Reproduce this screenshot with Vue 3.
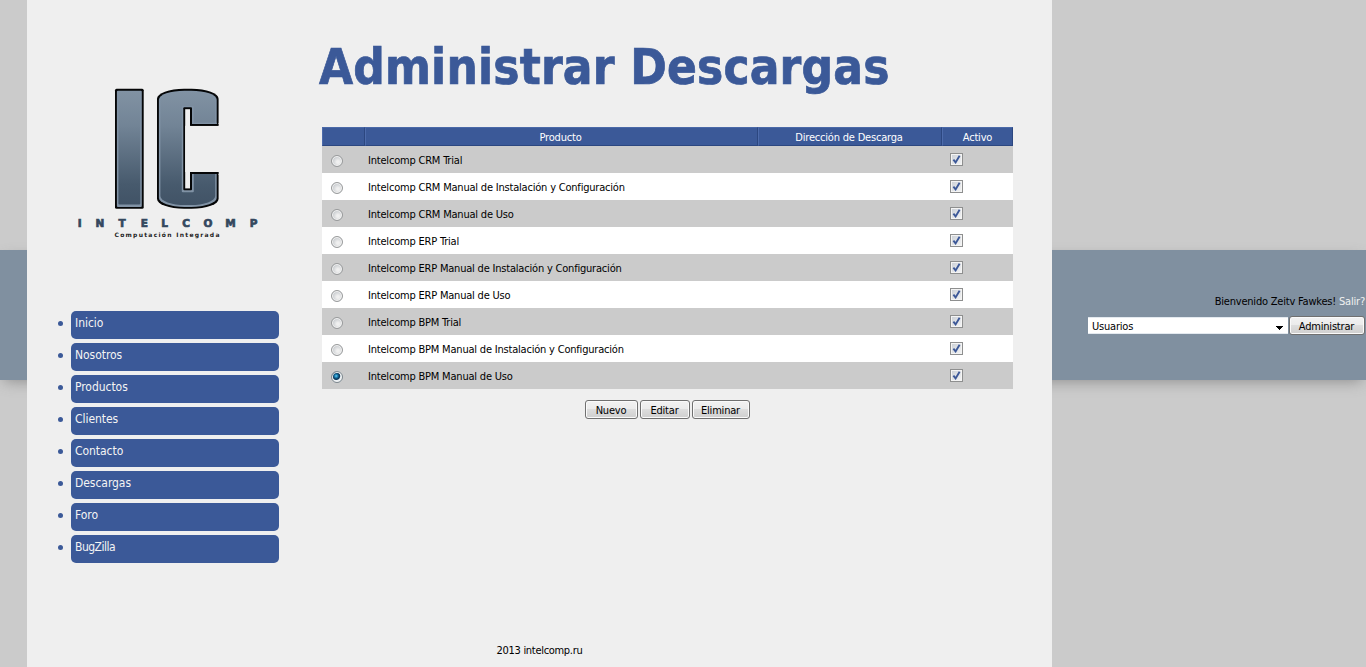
<script setup>
import { ref } from 'vue'

const menu = ['Inicio', 'Nosotros', 'Productos', 'Clientes', 'Contacto', 'Descargas', 'Foro', 'BugZilla']
const products = ['CRM', 'ERP', 'BPM'].flatMap((name) => [
  `Intelcomp ${name} Trial`,
  `Intelcomp ${name} Manual de Instalación y Configuración`,
  `Intelcomp ${name} Manual de Uso`,
])
const selected = ref(8)
</script>

<template>
  <div class="page">
    <div class="band">
      <div class="account">
        <p class="welcome">Bienvenido Zeitv Fawkes! <a>Salir?</a></p>
        <div class="admin">
          <div class="select">
            <span>Usuarios</span>
            <svg width="7" height="4" viewBox="0 0 7 4" shape-rendering="crispEdges"><path d="M0 0h7v1H6v1H5v1H4v1H3V3H2V2H1V1H0z" /></svg>
          </div>
          <button class="btn btn-admin">Administrar</button>
        </div>
      </div>
    </div>

    <div class="main">
      <aside class="side">
        <svg class="logo" width="184" height="156" viewBox="76 86 184 156">
          <defs>
            <linearGradient id="steel" x1="0" y1="0" x2="0" y2="1">
              <stop offset="0" stop-color="#8192a3" />
              <stop offset=".3" stop-color="#728496" />
              <stop offset=".82" stop-color="#475a6d" />
              <stop offset="1" stop-color="#415366" />
            </linearGradient>
          </defs>
          <rect x="115" y="88.8" width="28.7" height="120" rx="1.5" fill="#050607" />
          <rect x="116.9" y="90.7" width="24.9" height="116.2" rx="1" fill="#8092a5" />
          <rect x="118.4" y="91.5" width="21.9" height="113" rx="1" fill="url(#steel)" />
          <rect x="157" y="88.8" width="61.6" height="120" rx="27" ry="10" fill="#050607" />
          <rect x="158.9" y="90.7" width="57.8" height="116.2" rx="25.5" ry="9" fill="#8092a5" />
          <rect x="160.4" y="91.5" width="54.8" height="113.6" rx="24.5" ry="9" fill="url(#steel)" />
          <g fill="#8092a5">
            <rect x="181.8" y="106" width="12" height="86.2" rx="1" />
            <rect x="190" y="122.7" width="26.7" height="50.9" />
          </g>
          <g fill="#050607">
            <rect x="183.3" y="107.3" width="8.7" height="83" rx="1" />
            <rect x="190" y="123.9" width="28.6" height="50" rx="1" />
          </g>
          <g fill="#efefef">
            <rect x="185.2" y="109.2" width="4.8" height="79.2" />
            <rect x="185.2" y="125.8" width="34.4" height="46.2" />
            <rect x="218.6" y="123" width="2" height="52" />
          </g>
          <g fill="#050607">
            <rect x="190" y="123.9" width="28.6" height="1.9" rx="1" />
            <rect x="190" y="172" width="28.6" height="1.9" rx="1" />
          </g>
          <text class="brand" y="227.4" x="79.7 100 122 144.3 164.7 186 208 230.5 253.7">INTELCOMP</text>
          <text class="tagline" x="114.5" y="237" textLength="105" lengthAdjust="spacing">Computación Integrada</text>
        </svg>
        <ul class="menu">
          <li v-for="item in menu" :key="item"><a>{{ item }}</a></li>
        </ul>
      </aside>

      <section class="content">
        <h1>Administrar Descargas</h1>
        <div class="grid">
          <div class="row head">
            <span></span><span>Producto</span><span>Dirección de Descarga</span><span>Activo</span>
          </div>
          <div v-for="(name, i) in products" :key="name" class="row" :class="{ odd: i % 2 === 0 }" @click="selected = i">
            <span class="pick">
              <i class="radio" :class="{ on: selected === i }"></i>
            </span>
            <span class="name">{{ name }}</span>
            <span></span>
            <span class="active">
              <i class="check">
                <svg width="9" height="9" viewBox="0 0 9 9"><path d="M1.4 4.6 3.6 7.4 7.6.8" fill="none" stroke="#3c5898" stroke-width="1.9" /></svg>
              </i>
            </span>
          </div>
        </div>
        <div class="actions">
          <button class="btn btn-new">Nuevo</button>
          <button class="btn btn-edit">Editar</button>
          <button class="btn btn-del">Eliminar</button>
        </div>
      </section>
      <footer>2013 intelcomp.ru</footer>
    </div>
  </div>
</template>

<style>
body { background: #cbcbcb; overflow: hidden; }
</style>

<style scoped>
.page {
  position: relative;
  height: 667px;
  width: 1366px;
  overflow: hidden;
  background: #cbcbcb;
  font-family: "DejaVu Sans Condensed", "DejaVu Sans", sans-serif;
  font-stretch: condensed;
  font-size: 11px;
  letter-spacing: -0.2px;
  color: #000;
}
.band {
  position: absolute;
  top: 250px;
  left: 0;
  width: 1366px;
  height: 130px;
  background: #8090a0;
  box-shadow: 0 5px 14px -4px #8c8c8c;
  display: flex;
  justify-content: flex-end;
}
.account { width: 278px; padding-top: 45px; }
.welcome { margin: 0; height: 21px; line-height: 14px; text-align: right; white-space: nowrap; padding-right: 1px; }
.welcome a { color: #f0f0f0; }
.admin { display: flex; gap: 1px; align-items: flex-start; }
.select {
  box-sizing: border-box;
  width: 200px;
  height: 17px;
  margin-top: 1px;
  padding: 1px 5px 0 4px;
  background: #fff;
  border: 1px solid #e3e9ef;
  border-width: 1px 0;
  display: flex;
  align-items: center;
  justify-content: space-between;
}
.select svg { margin-top: 4px; }
.main {
  position: relative;
  box-sizing: border-box;
  margin-left: 27px;
  width: 1025px;
  height: 667px;
  background: #efefef;
  display: grid;
  grid-template-columns: 295px 1fr;
  grid-template-rows: 643px 24px;
}
.logo { display: block; margin: 86px 0 0 49px; }
.brand { font: bold 10.5px "DejaVu Sans", sans-serif; fill: #34485e; stroke: #34485e; stroke-width: .7px; text-anchor: middle; letter-spacing: 0; }
.tagline { font: bold 6px "DejaVu Sans", sans-serif; fill: #222; letter-spacing: 0; }
.menu { list-style: none; margin: 69px 0 0 31px; padding: 0; display: flex; flex-direction: column; gap: 4px; }
.menu li { display: flex; height: 28px; }
.menu li::before {
  content: "";
  width: 5px;
  height: 5px;
  margin: 10px 8px 0 0;
  border-radius: 50%;
  background: #3b5998;
}
.menu a {
  box-sizing: border-box;
  width: 208px;
  height: 28px;
  padding: 4px;
  border-radius: 5px;
  background: #3b5998;
  color: #f4f4f4;
  font-size: 12px;
  line-height: 16px;
  letter-spacing: -0.05px;
}
.menu li:last-child a { letter-spacing: -0.5px; }
.content { display: flex; flex-direction: column; }
h1 {
  margin: 38px 0 0 -3px;
  height: 89px;
  line-height: 60px;
  font-size: 49px;
  font-weight: bold;
  color: #3b5998;
  letter-spacing: 0.17px;
  -webkit-text-stroke: 0.7px #3b5998;
  white-space: nowrap;
}
.grid { width: 691px; }
.row { display: grid; grid-template-columns: 43px 393px 184px 71px; height: 27px; background: #fff; }
.row.odd { background: #cbcbcb; }
.row.head { height: 19px; background: #3b5998; color: #fff; text-align: center; letter-spacing: -0.2px; }
.head span {
  box-sizing: border-box;
  height: 19px;
  padding-right: 2px;
  border: 1px solid;
  border-color: #4a69a8 #2c4780 #2c4780 #4d6bab;
  line-height: 19px;
}
.head span:last-child { padding-right: 0; }
.pick { padding: 9px 0 0 9px; }
.name { padding: 1px 0 0 3px; line-height: 27px; height: 26px; white-space: nowrap; }
.radio {
  display: block;
  box-sizing: border-box;
  width: 12px;
  height: 12px;
  border: 1px solid #989a9b;
  border-radius: 50%;
  background: radial-gradient(circle at 60% 60%, #f0f0f0 15%, #cdd0d3 60%);
  box-shadow: inset 0 0 0 1px #f4f4f4;
}
.radio.on {
  border-color: #7c878e;
  background: radial-gradient(circle at 42% 40%, #6fd0f2 0, #1b81b4 18%, #0b3a5e 36%, #0b3a5e 42%, #e9eff3 54%);
}
.active { padding: 7px 0 0 8px; }
.check {
  display: flex;
  align-items: center;
  justify-content: center;
  box-sizing: border-box;
  width: 13px;
  height: 13px;
  border: 1px solid #8e8f8f;
  background: linear-gradient(135deg, #c9ced5, #f6f6f6);
  box-shadow: inset 0 0 0 1px #f4f4f4;
}
.actions { display: flex; gap: 2px; margin: 11px 0 0 263px; }
.btn {
  box-sizing: border-box;
  height: 19px;
  padding: 2px 1px 0 0;
  border: 1px solid #707070;
  border-radius: 3px;
  background: linear-gradient(#f2f2f2, #ebebeb 49%, #dddddd 50%, #cfcfcf);
  box-shadow: inset 0 0 0 1px #fafafa;
  font: inherit;
  line-height: 16px;
  letter-spacing: inherit;
  color: #000;
  white-space: nowrap;
}
.btn-admin { width: 76px; }
.btn-new { width: 53px; }
.btn-edit { width: 50px; }
.btn-del { width: 58px; }
footer { grid-column: 1 / -1; text-align: center; line-height: 16px; letter-spacing: -0.3px; }
</style>
